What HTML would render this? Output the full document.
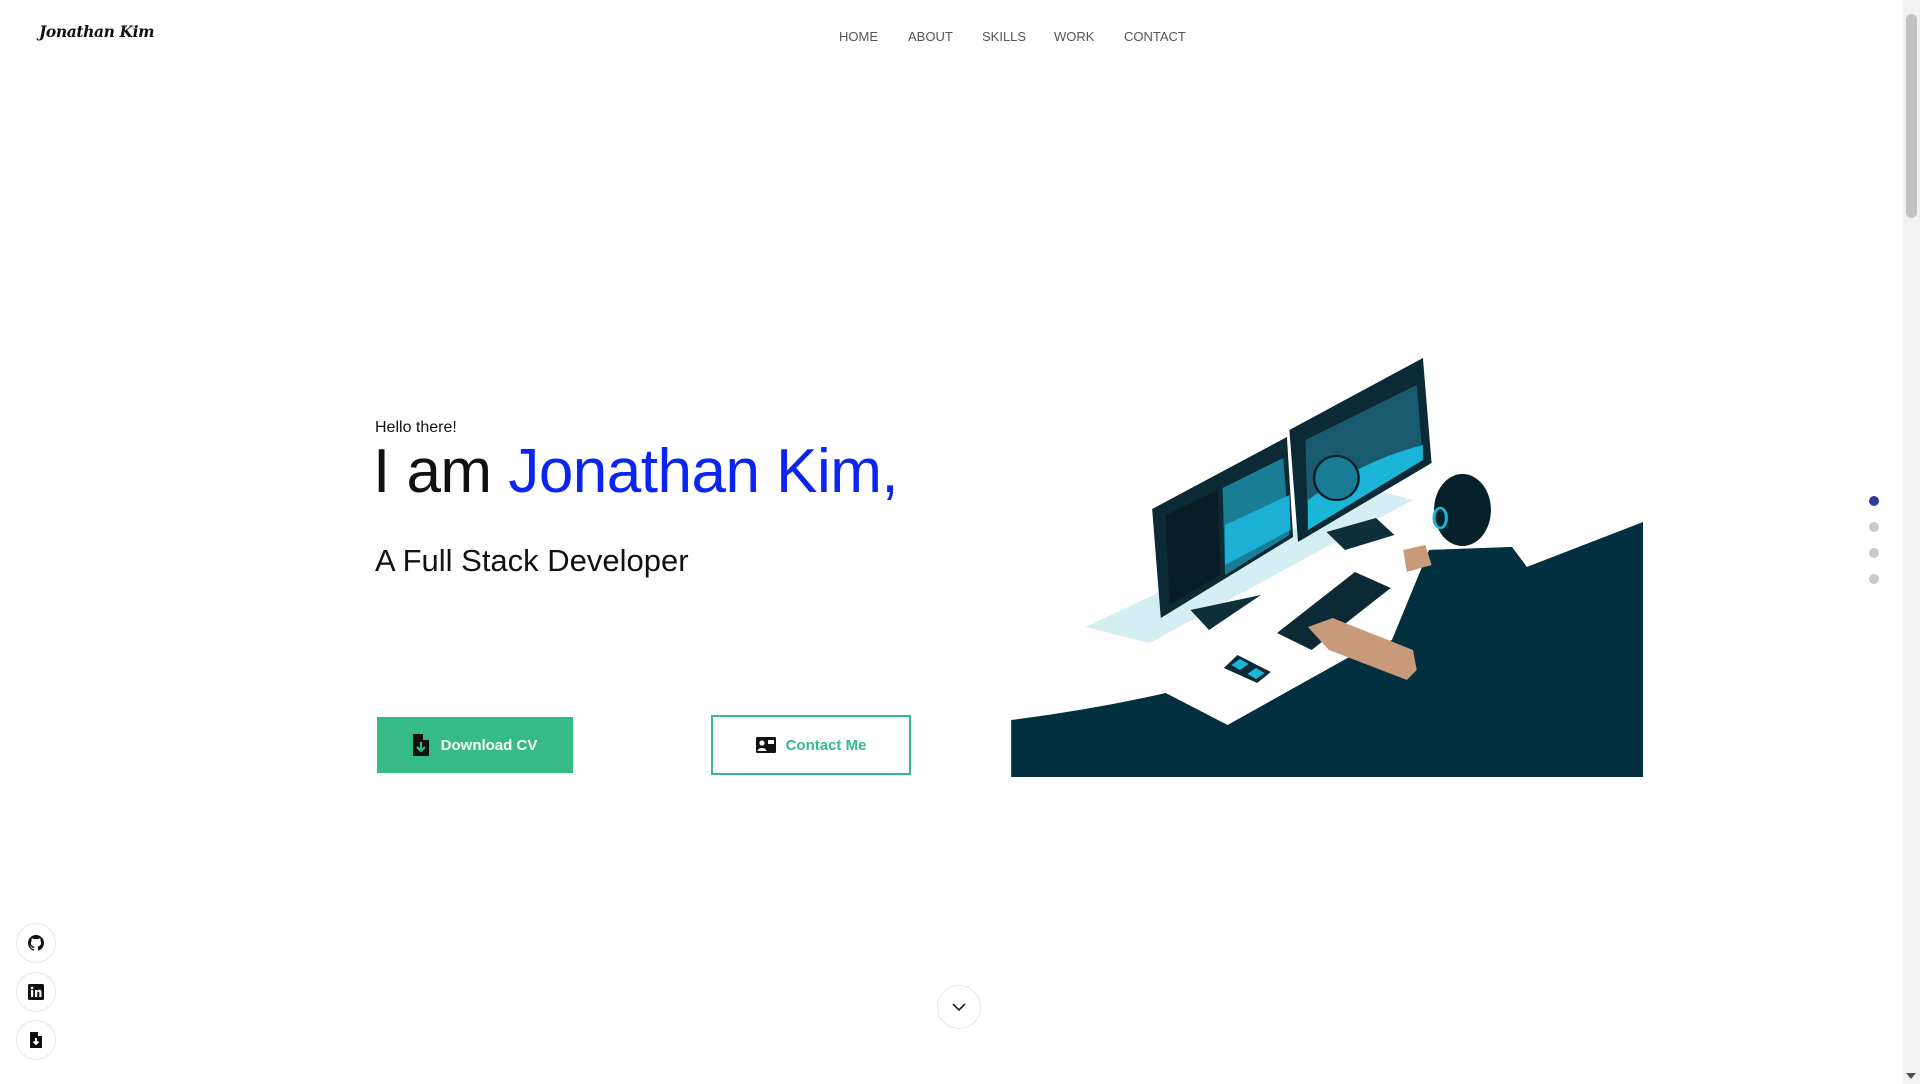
<!DOCTYPE html>
<html><head><meta charset="utf-8"><style>
*{margin:0;padding:0;box-sizing:border-box}
html,body{width:1920px;height:1084px;overflow:hidden;background:#fff;font-family:"Liberation Sans",sans-serif}
.abs{position:absolute}
.logo{left:39px;top:22px;font-family:"DejaVu Serif",serif;font-weight:bold;font-style:italic;font-size:15.5px;color:#111;letter-spacing:-0.4px}
.nav a{position:absolute;top:29px;font-size:13px;color:#555;text-decoration:none}
.sb{left:1903px;top:0;width:17px;height:1084px;background:#f1f1f1}
.sb i{position:absolute;left:3px;top:14px;width:11px;height:204px;background:#c1c1c1;border-radius:6px}
.dot{left:1869px;width:10px;height:10px;border-radius:50%;background:#c9c9c9}
.soc{left:16px;width:40px;height:40px;border-radius:50%;border:1px solid #e6e6e6;display:flex;align-items:center;justify-content:center}
</style></head><body>
<div class="abs logo">Jonathan Kim</div>
<div class="nav">
<a style="left:839px">HOME</a><a style="left:908px">ABOUT</a><a style="left:982px">SKILLS</a><a style="left:1054px">WORK</a><a style="left:1124px">CONTACT</a>
</div>
<div class="abs sb"><i></i></div>
<div class="abs" style="top:1073px;width:0;height:0;border-left:5px solid transparent;border-right:5px solid transparent;border-top:6px solid #505050;left:1906px"></div>

<div class="abs" style="left:375px;top:419px;font-size:16px;color:#111">Hello there!</div>
<div class="abs" style="left:373px;top:436px;font-size:62px;font-weight:500;color:#111;letter-spacing:-0.5px;white-space:nowrap">I am <span style="color:#0b24f2">Jonathan Kim,</span></div>
<div class="abs" style="left:375px;top:543px;font-size:31px;color:#111;white-space:nowrap">A Full Stack Developer</div>

<div class="abs" style="left:377px;top:717px;width:196px;height:56px;background:#36bb86;display:flex;align-items:center;justify-content:center;gap:12px;color:#fff;font-weight:bold;font-size:15px">
<svg width="16" height="22" viewBox="0 0 16 22"><path d="M0 0H10L16 6V22H0Z" fill="#111"/><path d="M10 0V6H16" fill="#36bb86"/><path d="M8 8V17M4 13L8 17L12 13" stroke="#36bb86" stroke-width="2.2" fill="none"/></svg>Download CV</div>
<div class="abs" style="left:711px;top:715px;width:200px;height:60px;border:2px solid #36bb86;display:flex;align-items:center;justify-content:center;gap:10px;color:#36bb86;font-weight:bold;font-size:15px">
<svg width="20" height="16" viewBox="0 0 20 16"><rect width="20" height="16" rx="1.5" fill="#111"/><circle cx="6" cy="6" r="2.6" fill="#fff"/><path d="M1.5 14C2 10 10 10 10.5 14Z" fill="#fff"/><rect x="12" y="3" width="6" height="4" fill="#fff"/></svg>Contact Me</div>

<svg class="abs" style="left:1005px;top:350px" width="638" height="430" viewBox="0 0 516 430" preserveAspectRatio="none">
<path d="M65 277L117 293L330 150L300 140Z" fill="#d5eef3"/>
<path d="M5 370Q70 360 130 343L180 375L277 308L313 290L343 200L410 197L422 217L516 172V427H5Z" fill="#02303f"/>
<path d="M150 260L207 245L165 280Z" fill="#0d2f3a"/>
<path d="M119 159L228 87L233 187L126 268Z" fill="#0b2a35"/>
<path d="M176 138L225 108L230 185L178 225Z" fill="#1a7d96"/>
<path d="M178 175L230 145L231 180L178 215Z" fill="#1bb0d4"/>
<path d="M130 165L172 140L174 225L133 255Z" fill="#071d25"/>
<path d="M260 182L300 168L315 185L275 200Z" fill="#0d2f3a"/>
<path d="M230 80L338 8L345 113L237 192Z" fill="#0b2a35"/>
<path d="M243 90L333 35L338 110L245 180Z" fill="#1a5a6e"/>
<path d="M245 150Q290 110 338 95L338 110L245 180Z" fill="#1bb5d8"/>
<ellipse cx="268" cy="128" rx="18" ry="22" fill="#1a7d96" stroke="#06202a" stroke-width="2"/>
<path d="M220 283L283 222L312 238L248 300Z" fill="#0b2a35"/>
<path d="M177 318L188 305L215 322L204 333Z" fill="#0b2a35"/>
<path d="M183 315L190 309L197 314L190 320ZM196 324L203 318L210 323L203 329Z" fill="#1bb5d8"/>
<path d="M313 290L343 200L410 197L430 230L420 300L345 350Z" fill="#02303f"/>
<path d="M245 277L265 268L330 300L333 320L325 330L300 318L262 300Z" fill="#c99a7a"/>
<path d="M322 200L340 195L345 215L325 222Z" fill="#c99a7a"/>
<ellipse cx="370" cy="160" rx="23" ry="36" fill="#06202a"/>
<ellipse cx="352" cy="168" rx="5" ry="10" fill="none" stroke="#1bb5d8" stroke-width="2.5"/>
</svg>

<div class="abs dot" style="top:496px;background:#2c3e94"></div>
<div class="abs dot" style="top:522px"></div>
<div class="abs dot" style="top:548px"></div>
<div class="abs dot" style="top:574px"></div>

<div class="abs soc" style="top:923px"><svg width="16" height="16" viewBox="0 0 16 16"><path fill="#111" d="M8 0C3.58 0 0 3.58 0 8c0 3.54 2.29 6.53 5.47 7.59.4.07.55-.17.55-.38v-1.33c-2.23.48-2.7-1.07-2.7-1.07-.36-.92-.89-1.17-.89-1.17-.73-.5.05-.49.05-.49.8.06 1.23.83 1.23.83.72 1.22 1.87.87 2.33.66.07-.52.28-.87.51-1.07-1.78-.2-3.64-.89-3.64-3.95 0-.87.31-1.59.82-2.15-.08-.2-.36-1.02.08-2.12 0 0 .67-.21 2.2.82a7.6 7.6 0 014 0c1.53-1.04 2.2-.82 2.2-.82.44 1.1.16 1.92.08 2.12.51.56.82 1.27.82 2.15 0 3.07-1.87 3.75-3.65 3.95.29.25.54.73.54 1.48v2.2c0 .21.15.46.55.38A8 8 0 0016 8c0-4.42-3.58-8-8-8z"/></svg></div>
<div class="abs soc" style="top:972px"><svg width="16" height="16" viewBox="0 0 16 16"><rect width="16" height="16" rx="1.5" fill="#111"/><rect x="3" y="6" width="2.2" height="7" fill="#fff"/><circle cx="4.1" cy="3.9" r="1.3" fill="#fff"/><path d="M7 6h2v1c.5-.8 1.3-1.2 2.3-1.2 1.6 0 2.2 1 2.2 2.8V13h-2.2V9c0-.9-.3-1.4-1-1.4-.8 0-1.1.6-1.1 1.4v4H7z" fill="#fff"/></svg></div>
<div class="abs soc" style="top:1020px"><svg width="12" height="16" viewBox="0 0 12 16"><path d="M0 0H8L12 4V16H0Z" fill="#111"/><path d="M8 0V4H12" fill="#fff"/><path d="M6 6V12M3.5 9.5L6 12L8.5 9.5" stroke="#fff" stroke-width="1.8" fill="none"/></svg></div>

<div class="abs" style="left:937px;top:985px;width:44px;height:44px;border-radius:50%;border:1px solid #e6e6e6;display:flex;align-items:center;justify-content:center"><svg width="14" height="9" viewBox="0 0 14 9"><path d="M1 1L7 7L13 1" stroke="#222" stroke-width="1.6" fill="none"/></svg></div>
</body></html>
